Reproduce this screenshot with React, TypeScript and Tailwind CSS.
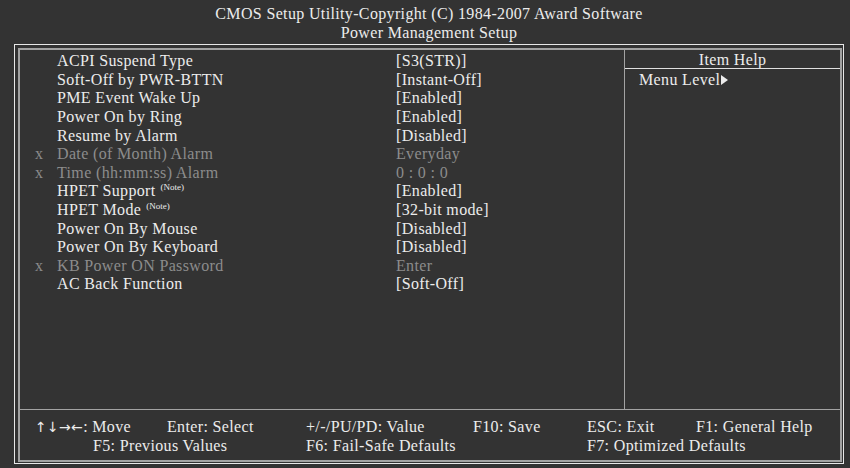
import type { ReactNode } from 'react';

type Row = {
  label: string;
  value: string;
  note?: boolean;
  off?: boolean;
};

const rows: Row[] = [
  { label: 'ACPI Suspend Type', value: '[S3(STR)]' },
  { label: 'Soft-Off by PWR-BTTN', value: '[Instant-Off]' },
  { label: 'PME Event Wake Up', value: '[Enabled]' },
  { label: 'Power On by Ring', value: '[Enabled]' },
  { label: 'Resume by Alarm', value: '[Disabled]' },
  { label: 'Date (of Month) Alarm', value: 'Everyday', off: true },
  { label: 'Time (hh:mm:ss) Alarm', value: '0 : 0 : 0', off: true },
  { label: 'HPET Support', value: '[Enabled]', note: true },
  { label: 'HPET Mode', value: '[32-bit mode]', note: true },
  { label: 'Power On By Mouse', value: '[Disabled]' },
  { label: 'Power On By Keyboard', value: '[Disabled]' },
  { label: 'KB Power ON Password', value: 'Enter', off: true },
  { label: 'AC Back Function', value: '[Soft-Off]' },
];

function Note() {
  return (
    <span className="relative -top-[6px] ml-[5px] text-[9px] leading-none tracking-normal">
      (Note)
    </span>
  );
}

function SettingRow({ row }: { row: Row }) {
  return (
    <div className={`flex ${row.off ? 'text-[#8c8c8c]' : ''}`}>
      <span className="w-[37px] shrink-0 pl-[15px]">{row.off ? 'x' : ''}</span>
      <span className="w-[339px] shrink-0">
        {row.label}
        {row.note ? <Note /> : null}
      </span>
      <span>{row.value}</span>
    </div>
  );
}

function Key({ w, children }: { w?: string; children: ReactNode }) {
  return <span className={`shrink-0 ${w ?? ''}`}>{children}</span>;
}

export default function App() {
  return (
    <div
      className="h-[468px] w-[850px] overflow-hidden bg-[#333333] text-[16px] leading-[18.6px] tracking-[0.35px] text-[#ececec]"
      style={{ fontFamily: '"Liberation Serif", "Times New Roman", serif' }}
    >
      <div className="ml-[14px] w-[830px] pt-[5px] text-center">
        <div>CMOS Setup Utility-Copyright (C) 1984-2007 Award Software</div>
        <div>Power Management Setup</div>
      </div>
      <div className="ml-[14px] mt-[2px] h-[420px] w-[830px] border border-[#e8e8e8] pb-[1px] pl-[3px] pr-[1px] pt-[3px]">
        <div className="flex h-full flex-col border-2 border-[#a3a3a3]">
          <div className="flex h-[359px]">
            <div className="w-[605px] shrink-0 border-r border-[#a3a3a3] pt-[2px]">
              {rows.map((r) => (
                <SettingRow key={r.label} row={r} />
              ))}
            </div>
            <div className="flex-1">
              <div className="box-border h-[19px] overflow-hidden border-b border-[#e0e0e0] pt-[1px] leading-[17px] text-center">
                Item Help
              </div>
              <div className="flex items-center pl-[14px] pt-[2px]">
                Menu Level
                <svg width="7" height="10" viewBox="0 0 7 10" className="ml-[1px]">
                  <path d="M0 0 L7 5 L0 10 Z" fill="#ececec" />
                </svg>
              </div>
            </div>
          </div>
          <div className="flex-1 border-t border-[#a3a3a3] pt-[8px]">
            <div className="flex pl-[15px]">
              <Key w="w-[132px]">
                <span
                  className="text-[14px] tracking-[0.3px]"
                  style={{ fontFamily: '"DejaVu Sans", sans-serif' }}
                >
                  ↑↓→←
                </span>
                : Move
              </Key>
              <Key w="w-[139px]">Enter: Select</Key>
              <Key w="w-[167px]">+/-/PU/PD: Value</Key>
              <Key w="w-[114px]">F10: Save</Key>
              <Key w="w-[109px]">ESC: Exit</Key>
              <Key>F1: General Help</Key>
            </div>
            <div className="flex pl-[73px]">
              <Key w="w-[213px]">F5: Previous Values</Key>
              <Key w="w-[281px]">F6: Fail-Safe Defaults</Key>
              <Key>F7: Optimized Defaults</Key>
            </div>
          </div>
        </div>
      </div>
    </div>
  );
}
